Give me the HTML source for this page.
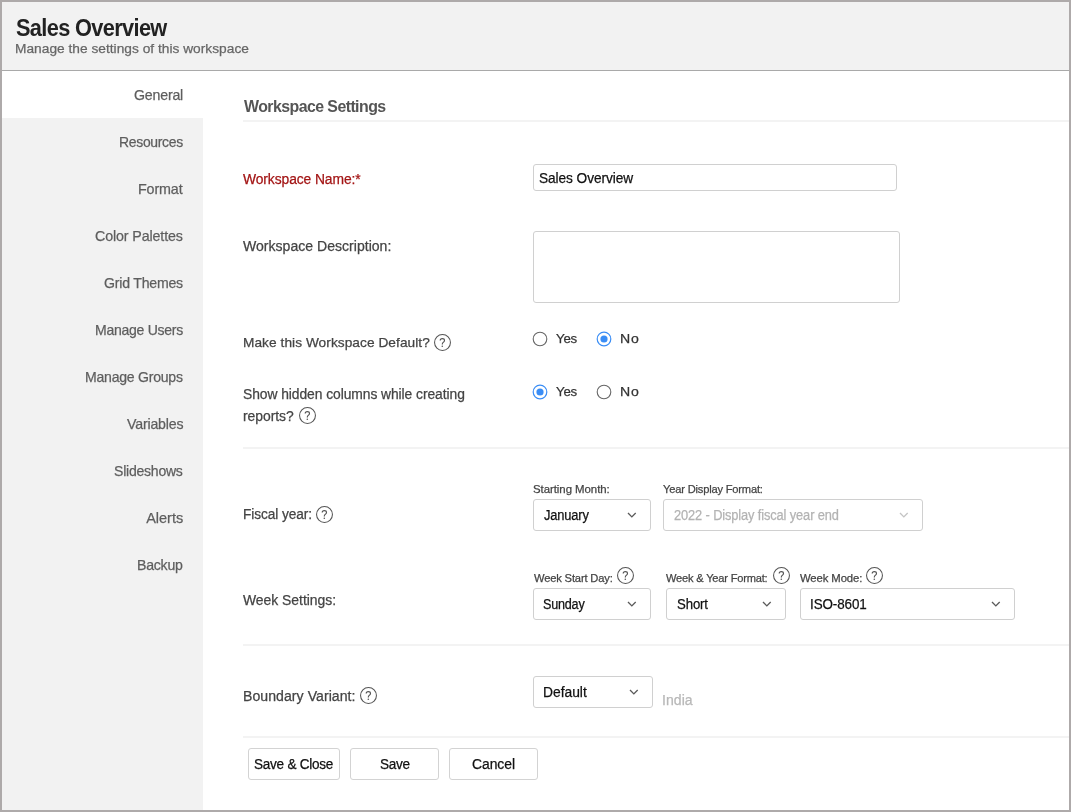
<!DOCTYPE html>
<html><head><meta charset="utf-8"><style>
html,body{margin:0;padding:0;width:1071px;height:812px;overflow:hidden;background:#fff;}
body{position:relative;will-change:transform;font-family:"Liberation Sans",sans-serif;}
.t{position:absolute;transform-origin:0 0;white-space:nowrap;font-family:"Liberation Sans",sans-serif;-webkit-text-stroke:0.25px currentColor;}
.b{position:absolute;}
svg.b{overflow:visible;}
</style></head><body>
<div class="b" style="left:0px;top:0px;width:1071px;height:812px;background:#fff;"></div>
<div class="b" style="left:2px;top:2px;width:1067px;height:68px;background:#f2f2f2;"></div>
<div class="b" style="left:2px;top:70px;width:1067px;height:1px;background:#a9a9a9;"></div>
<div class="b" style="left:2px;top:118px;width:201px;height:692px;background:#f2f2f2;"></div>
<div class="b" style="left:0px;top:0px;width:1071px;height:2px;background:#aeaaaa;"></div>
<div class="b" style="left:0px;top:810px;width:1071px;height:2px;background:#aeaaaa;"></div>
<div class="b" style="left:0px;top:0px;width:2px;height:812px;background:#aeaaaa;"></div>
<div class="b" style="left:1069px;top:0px;width:2px;height:812px;background:#aeaaaa;"></div>
<div class="t" style="left:15.65px;top:17.43px;font-size:23px;line-height:23px;letter-spacing:-0.689px;color:#222;font-weight:700;-webkit-text-stroke:0;transform:scaleX(0.9467);">Sales Overview</div>
<div class="t" style="left:15.20px;top:41.60px;font-size:13.7px;line-height:13.7px;letter-spacing:0.015px;color:#666;transform:scaleX(1.0023);">Manage the settings of this workspace</div>
<div class="t" style="left:134.29px;top:87.93px;font-size:14.5px;line-height:14.5px;letter-spacing:-0.192px;color:#5e5e5e;transform:scaleX(0.9769);">General</div>
<div class="t" style="left:118.88px;top:134.93px;font-size:14.5px;line-height:14.5px;letter-spacing:-0.321px;color:#5e5e5e;transform:scaleX(0.9620);">Resources</div>
<div class="t" style="left:138.06px;top:181.93px;font-size:14.5px;line-height:14.5px;letter-spacing:-0.127px;color:#5e5e5e;transform:scaleX(0.9858);">Format</div>
<div class="t" style="left:95.19px;top:228.93px;font-size:14.5px;line-height:14.5px;letter-spacing:-0.121px;color:#5e5e5e;transform:scaleX(0.9824);">Color Palettes</div>
<div class="t" style="left:103.99px;top:275.93px;font-size:14.5px;line-height:14.5px;letter-spacing:-0.222px;color:#5e5e5e;transform:scaleX(0.9730);">Grid Themes</div>
<div class="t" style="left:94.78px;top:322.93px;font-size:14.5px;line-height:14.5px;letter-spacing:-0.275px;color:#5e5e5e;transform:scaleX(0.9673);">Manage Users</div>
<div class="t" style="left:85.17px;top:369.93px;font-size:14.5px;line-height:14.5px;letter-spacing:-0.254px;color:#5e5e5e;transform:scaleX(0.9702);">Manage Groups</div>
<div class="t" style="left:126.53px;top:416.93px;font-size:14.5px;line-height:14.5px;letter-spacing:-0.177px;color:#5e5e5e;transform:scaleX(0.9759);">Variables</div>
<div class="t" style="left:114.17px;top:463.93px;font-size:14.5px;line-height:14.5px;letter-spacing:-0.249px;color:#5e5e5e;transform:scaleX(0.9690);">Slideshows</div>
<div class="t" style="left:146.20px;top:510.93px;font-size:14.5px;line-height:14.5px;letter-spacing:-0.014px;color:#5e5e5e;">Alerts</div>
<div class="t" style="left:137.27px;top:557.93px;font-size:14.5px;line-height:14.5px;letter-spacing:-0.245px;color:#5e5e5e;transform:scaleX(0.9737);">Backup</div>
<div class="t" style="left:243.70px;top:97.71px;font-size:17px;line-height:17px;letter-spacing:-0.608px;color:#555;font-weight:700;-webkit-text-stroke:0;transform:scaleX(0.9360);">Workspace Settings</div>
<div class="b" style="left:243px;top:120px;width:826px;height:2px;background:#f3f3f3;"></div>
<div class="t" style="left:243.13px;top:172.15px;font-size:14px;line-height:14px;letter-spacing:-0.089px;color:#a31515;transform:scaleX(0.9889);">Workspace Name:*</div>
<div class="b" style="left:533px;top:164px;width:364px;height:27px;border:1px solid #d0d0d0;border-radius:3px;box-sizing:border-box;background:#fff;"></div>
<div class="t" style="left:538.68px;top:171.10px;font-size:14.3px;line-height:14.3px;letter-spacing:-0.082px;color:#111;transform:scaleX(0.9573);">Sales Overview</div>
<div class="t" style="left:243.43px;top:238.65px;font-size:14px;line-height:14px;letter-spacing:0.018px;color:#444;transform:scaleX(1.0026);">Workspace Description:</div>
<div class="b" style="left:533px;top:231px;width:367px;height:72px;border:1px solid #d0d0d0;border-radius:3px;box-sizing:border-box;background:#fff;"></div>
<div class="t" style="left:242.65px;top:336.49px;font-size:13.6px;line-height:13.6px;letter-spacing:0.049px;color:#444;transform:scaleX(1.0073);">Make this Workspace Default?</div>
<svg class="b" style="left:434.00px;top:333.90px" width="17" height="17" viewBox="0 0 17 17"><circle cx="8.5" cy="8.5" r="7.95" fill="none" stroke="#555" stroke-width="1.05"/><path d="M6.2 6.6 C6.2 5.3 7.1 4.6 8.3 4.6 C9.5 4.6 10.5 5.4 10.5 6.5 C10.5 7.6 9.6 8.1 8.9 8.7 C8.4 9.2 8.3 9.6 8.3 10.5" fill="none" stroke="#555" stroke-width="1.15"/><circle cx="8.3" cy="12.3" r="0.8" fill="#555"/></svg>
<svg class="b" style="left:532.4px;top:331.3px" width="16" height="16" viewBox="0 0 16 16"><circle cx="8" cy="8" r="6.8" fill="#fff" stroke="#666" stroke-width="1.1"/></svg>
<div class="t" style="left:556.27px;top:332.07px;font-size:13.5px;line-height:13.5px;letter-spacing:-0.201px;color:#333;transform:scaleX(0.9811);">Yes</div>
<svg class="b" style="left:596.4px;top:331.3px" width="16" height="16" viewBox="0 0 16 16"><circle cx="8" cy="8" r="6.8" fill="#fff" stroke="#3a8df5" stroke-width="1.2"/><circle cx="8" cy="8" r="3.6" fill="#3a8df5"/></svg>
<div class="t" style="left:619.67px;top:332.07px;font-size:13.5px;line-height:13.5px;letter-spacing:0.689px;color:#333;transform:scaleX(1.0442);">No</div>
<div class="t" style="left:242.98px;top:387.35px;font-size:14px;line-height:14px;letter-spacing:-0.070px;color:#444;transform:scaleX(0.9897);">Show hidden columns while creating</div>
<div class="t" style="left:242.70px;top:409.15px;font-size:14px;line-height:14px;letter-spacing:-0.044px;color:#444;transform:scaleX(0.9939);">reports?</div>
<svg class="b" style="left:299.15px;top:406.90px" width="17" height="17" viewBox="0 0 17 17"><circle cx="8.5" cy="8.5" r="7.95" fill="none" stroke="#555" stroke-width="1.05"/><path d="M6.2 6.6 C6.2 5.3 7.1 4.6 8.3 4.6 C9.5 4.6 10.5 5.4 10.5 6.5 C10.5 7.6 9.6 8.1 8.9 8.7 C8.4 9.2 8.3 9.6 8.3 10.5" fill="none" stroke="#555" stroke-width="1.15"/><circle cx="8.3" cy="12.3" r="0.8" fill="#555"/></svg>
<svg class="b" style="left:532.4px;top:384.3px" width="16" height="16" viewBox="0 0 16 16"><circle cx="8" cy="8" r="6.8" fill="#fff" stroke="#3a8df5" stroke-width="1.2"/><circle cx="8" cy="8" r="3.6" fill="#3a8df5"/></svg>
<div class="t" style="left:556.27px;top:385.07px;font-size:13.5px;line-height:13.5px;letter-spacing:-0.201px;color:#333;transform:scaleX(0.9811);">Yes</div>
<svg class="b" style="left:596.4px;top:384.3px" width="16" height="16" viewBox="0 0 16 16"><circle cx="8" cy="8" r="6.8" fill="#fff" stroke="#666" stroke-width="1.1"/></svg>
<div class="t" style="left:619.67px;top:385.07px;font-size:13.5px;line-height:13.5px;letter-spacing:0.689px;color:#333;transform:scaleX(1.0442);">No</div>
<div class="b" style="left:243px;top:447px;width:826px;height:2px;background:#f3f3f3;"></div>
<div class="t" style="left:242.51px;top:508.32px;font-size:13.8px;line-height:13.8px;letter-spacing:-0.063px;color:#444;transform:scaleX(0.9899);">Fiscal year:</div>
<svg class="b" style="left:316.10px;top:505.70px" width="17" height="17" viewBox="0 0 17 17"><circle cx="8.5" cy="8.5" r="7.95" fill="none" stroke="#555" stroke-width="1.05"/><path d="M6.2 6.6 C6.2 5.3 7.1 4.6 8.3 4.6 C9.5 4.6 10.5 5.4 10.5 6.5 C10.5 7.6 9.6 8.1 8.9 8.7 C8.4 9.2 8.3 9.6 8.3 10.5" fill="none" stroke="#555" stroke-width="1.15"/><circle cx="8.3" cy="12.3" r="0.8" fill="#555"/></svg>
<div class="t" style="left:532.99px;top:483.67px;font-size:11.5px;line-height:11.5px;letter-spacing:-0.044px;color:#444;transform:scaleX(0.9920);">Starting Month:</div>
<div class="b" style="left:533px;top:499px;width:118px;height:32px;border:1px solid #d0d0d0;border-radius:3px;box-sizing:border-box;background:#fff;"></div>
<div class="t" style="left:544.11px;top:508.15px;font-size:14px;line-height:14px;letter-spacing:-0.171px;color:#111;transform:scaleX(0.9197);">January</div>
<svg class="b" style="left:626.70px;top:512.00px" width="9.7" height="5.9" viewBox="0 0 9.7 5.9"><path d="M1 1 L4.85 4.9 L8.7 1" fill="none" stroke="#5a5a5a" stroke-width="1.35"/></svg>
<div class="t" style="left:663.32px;top:483.67px;font-size:11.5px;line-height:11.5px;letter-spacing:-0.187px;color:#444;transform:scaleX(0.9664);">Year Display Format:</div>
<div class="b" style="left:663px;top:499px;width:260px;height:32px;border:1px solid #d0d0d0;border-radius:3px;box-sizing:border-box;background:#fff;"></div>
<div class="t" style="left:673.96px;top:508.15px;font-size:14px;line-height:14px;letter-spacing:-0.134px;color:#b3b3b3;transform:scaleX(0.9174);">2022 - Display fiscal year end</div>
<svg class="b" style="left:898.70px;top:512.00px" width="9.7" height="5.9" viewBox="0 0 9.7 5.9"><path d="M1 1 L4.85 4.9 L8.7 1" fill="none" stroke="#c4c4c4" stroke-width="1.35"/></svg>
<div class="t" style="left:243.23px;top:592.65px;font-size:14px;line-height:14px;letter-spacing:-0.032px;color:#444;transform:scaleX(0.9955);">Week Settings:</div>
<div class="t" style="left:533.54px;top:572.97px;font-size:11.5px;line-height:11.5px;letter-spacing:-0.170px;color:#444;transform:scaleX(0.9711);">Week Start Day:</div>
<svg class="b" style="left:616.90px;top:566.80px" width="17" height="17" viewBox="0 0 17 17"><circle cx="8.5" cy="8.5" r="7.95" fill="none" stroke="#555" stroke-width="1.05"/><path d="M6.2 6.6 C6.2 5.3 7.1 4.6 8.3 4.6 C9.5 4.6 10.5 5.4 10.5 6.5 C10.5 7.6 9.6 8.1 8.9 8.7 C8.4 9.2 8.3 9.6 8.3 10.5" fill="none" stroke="#555" stroke-width="1.15"/><circle cx="8.3" cy="12.3" r="0.8" fill="#555"/></svg>
<div class="b" style="left:533px;top:588px;width:118px;height:32px;border:1px solid #d0d0d0;border-radius:3px;box-sizing:border-box;background:#fff;"></div>
<div class="t" style="left:543.43px;top:597.15px;font-size:14px;line-height:14px;letter-spacing:-0.241px;color:#111;transform:scaleX(0.9009);">Sunday</div>
<svg class="b" style="left:626.70px;top:601.00px" width="9.7" height="5.9" viewBox="0 0 9.7 5.9"><path d="M1 1 L4.85 4.9 L8.7 1" fill="none" stroke="#5a5a5a" stroke-width="1.35"/></svg>
<div class="t" style="left:666.14px;top:572.97px;font-size:11.5px;line-height:11.5px;letter-spacing:-0.209px;color:#444;transform:scaleX(0.9652);">Week & Year Format:</div>
<svg class="b" style="left:772.80px;top:566.80px" width="17" height="17" viewBox="0 0 17 17"><circle cx="8.5" cy="8.5" r="7.95" fill="none" stroke="#555" stroke-width="1.05"/><path d="M6.2 6.6 C6.2 5.3 7.1 4.6 8.3 4.6 C9.5 4.6 10.5 5.4 10.5 6.5 C10.5 7.6 9.6 8.1 8.9 8.7 C8.4 9.2 8.3 9.6 8.3 10.5" fill="none" stroke="#555" stroke-width="1.15"/><circle cx="8.3" cy="12.3" r="0.8" fill="#555"/></svg>
<div class="b" style="left:666px;top:588px;width:120px;height:32px;border:1px solid #d0d0d0;border-radius:3px;box-sizing:border-box;background:#fff;"></div>
<div class="t" style="left:676.61px;top:597.15px;font-size:14px;line-height:14px;letter-spacing:-0.123px;color:#111;transform:scaleX(0.9411);">Short</div>
<svg class="b" style="left:761.70px;top:601.00px" width="9.7" height="5.9" viewBox="0 0 9.7 5.9"><path d="M1 1 L4.85 4.9 L8.7 1" fill="none" stroke="#5a5a5a" stroke-width="1.35"/></svg>
<div class="t" style="left:799.94px;top:572.97px;font-size:11.5px;line-height:11.5px;letter-spacing:-0.109px;color:#444;transform:scaleX(0.9845);">Week Mode:</div>
<svg class="b" style="left:865.50px;top:566.80px" width="17" height="17" viewBox="0 0 17 17"><circle cx="8.5" cy="8.5" r="7.95" fill="none" stroke="#555" stroke-width="1.05"/><path d="M6.2 6.6 C6.2 5.3 7.1 4.6 8.3 4.6 C9.5 4.6 10.5 5.4 10.5 6.5 C10.5 7.6 9.6 8.1 8.9 8.7 C8.4 9.2 8.3 9.6 8.3 10.5" fill="none" stroke="#555" stroke-width="1.15"/><circle cx="8.3" cy="12.3" r="0.8" fill="#555"/></svg>
<div class="b" style="left:800px;top:588px;width:215px;height:32px;border:1px solid #d0d0d0;border-radius:3px;box-sizing:border-box;background:#fff;"></div>
<div class="t" style="left:810.09px;top:597.15px;font-size:14px;line-height:14px;letter-spacing:-0.091px;color:#111;transform:scaleX(0.9566);">ISO-8601</div>
<svg class="b" style="left:990.70px;top:601.00px" width="9.7" height="5.9" viewBox="0 0 9.7 5.9"><path d="M1 1 L4.85 4.9 L8.7 1" fill="none" stroke="#5a5a5a" stroke-width="1.35"/></svg>
<div class="b" style="left:243px;top:644px;width:826px;height:2px;background:#f3f3f3;"></div>
<div class="t" style="left:242.57px;top:689.05px;font-size:14px;line-height:14px;letter-spacing:0.045px;color:#444;transform:scaleX(1.0067);">Boundary Variant:</div>
<svg class="b" style="left:360.00px;top:686.80px" width="17" height="17" viewBox="0 0 17 17"><circle cx="8.5" cy="8.5" r="7.95" fill="none" stroke="#555" stroke-width="1.05"/><path d="M6.2 6.6 C6.2 5.3 7.1 4.6 8.3 4.6 C9.5 4.6 10.5 5.4 10.5 6.5 C10.5 7.6 9.6 8.1 8.9 8.7 C8.4 9.2 8.3 9.6 8.3 10.5" fill="none" stroke="#555" stroke-width="1.15"/><circle cx="8.3" cy="12.3" r="0.8" fill="#555"/></svg>
<div class="b" style="left:533px;top:676px;width:120px;height:32px;border:1px solid #d0d0d0;border-radius:3px;box-sizing:border-box;background:#fff;"></div>
<div class="t" style="left:543.19px;top:685.35px;font-size:14px;line-height:14px;letter-spacing:-0.021px;color:#111;transform:scaleX(0.9885);">Default</div>
<svg class="b" style="left:628.70px;top:689.00px" width="9.7" height="5.9" viewBox="0 0 9.7 5.9"><path d="M1 1 L4.85 4.9 L8.7 1" fill="none" stroke="#5a5a5a" stroke-width="1.35"/></svg>
<div class="t" style="left:662.43px;top:692.95px;font-size:14px;line-height:14px;letter-spacing:0.031px;color:#b8b8b8;transform:scaleX(1.0043);">India</div>
<div class="b" style="left:243px;top:736px;width:826px;height:2px;background:#f3f3f3;"></div>
<div class="b" style="left:248px;top:748px;width:92px;height:32px;border:1px solid #d3d3d3;border-radius:3px;box-sizing:border-box;background:#fff;"></div>
<div class="t" style="left:254.39px;top:756.55px;font-size:14px;line-height:14px;letter-spacing:-0.249px;color:#111;transform:scaleX(0.9673);">Save & Close</div>
<div class="b" style="left:350px;top:748px;width:89px;height:32px;border:1px solid #d3d3d3;border-radius:3px;box-sizing:border-box;background:#fff;"></div>
<div class="t" style="left:379.79px;top:756.55px;font-size:14px;line-height:14px;letter-spacing:-0.298px;color:#111;transform:scaleX(0.9709);">Save</div>
<div class="b" style="left:449px;top:748px;width:89px;height:32px;border:1px solid #d3d3d3;border-radius:3px;box-sizing:border-box;background:#fff;"></div>
<div class="t" style="left:472.30px;top:756.55px;font-size:14px;line-height:14px;letter-spacing:-0.053px;color:#111;transform:scaleX(0.9937);">Cancel</div>
</body></html>
